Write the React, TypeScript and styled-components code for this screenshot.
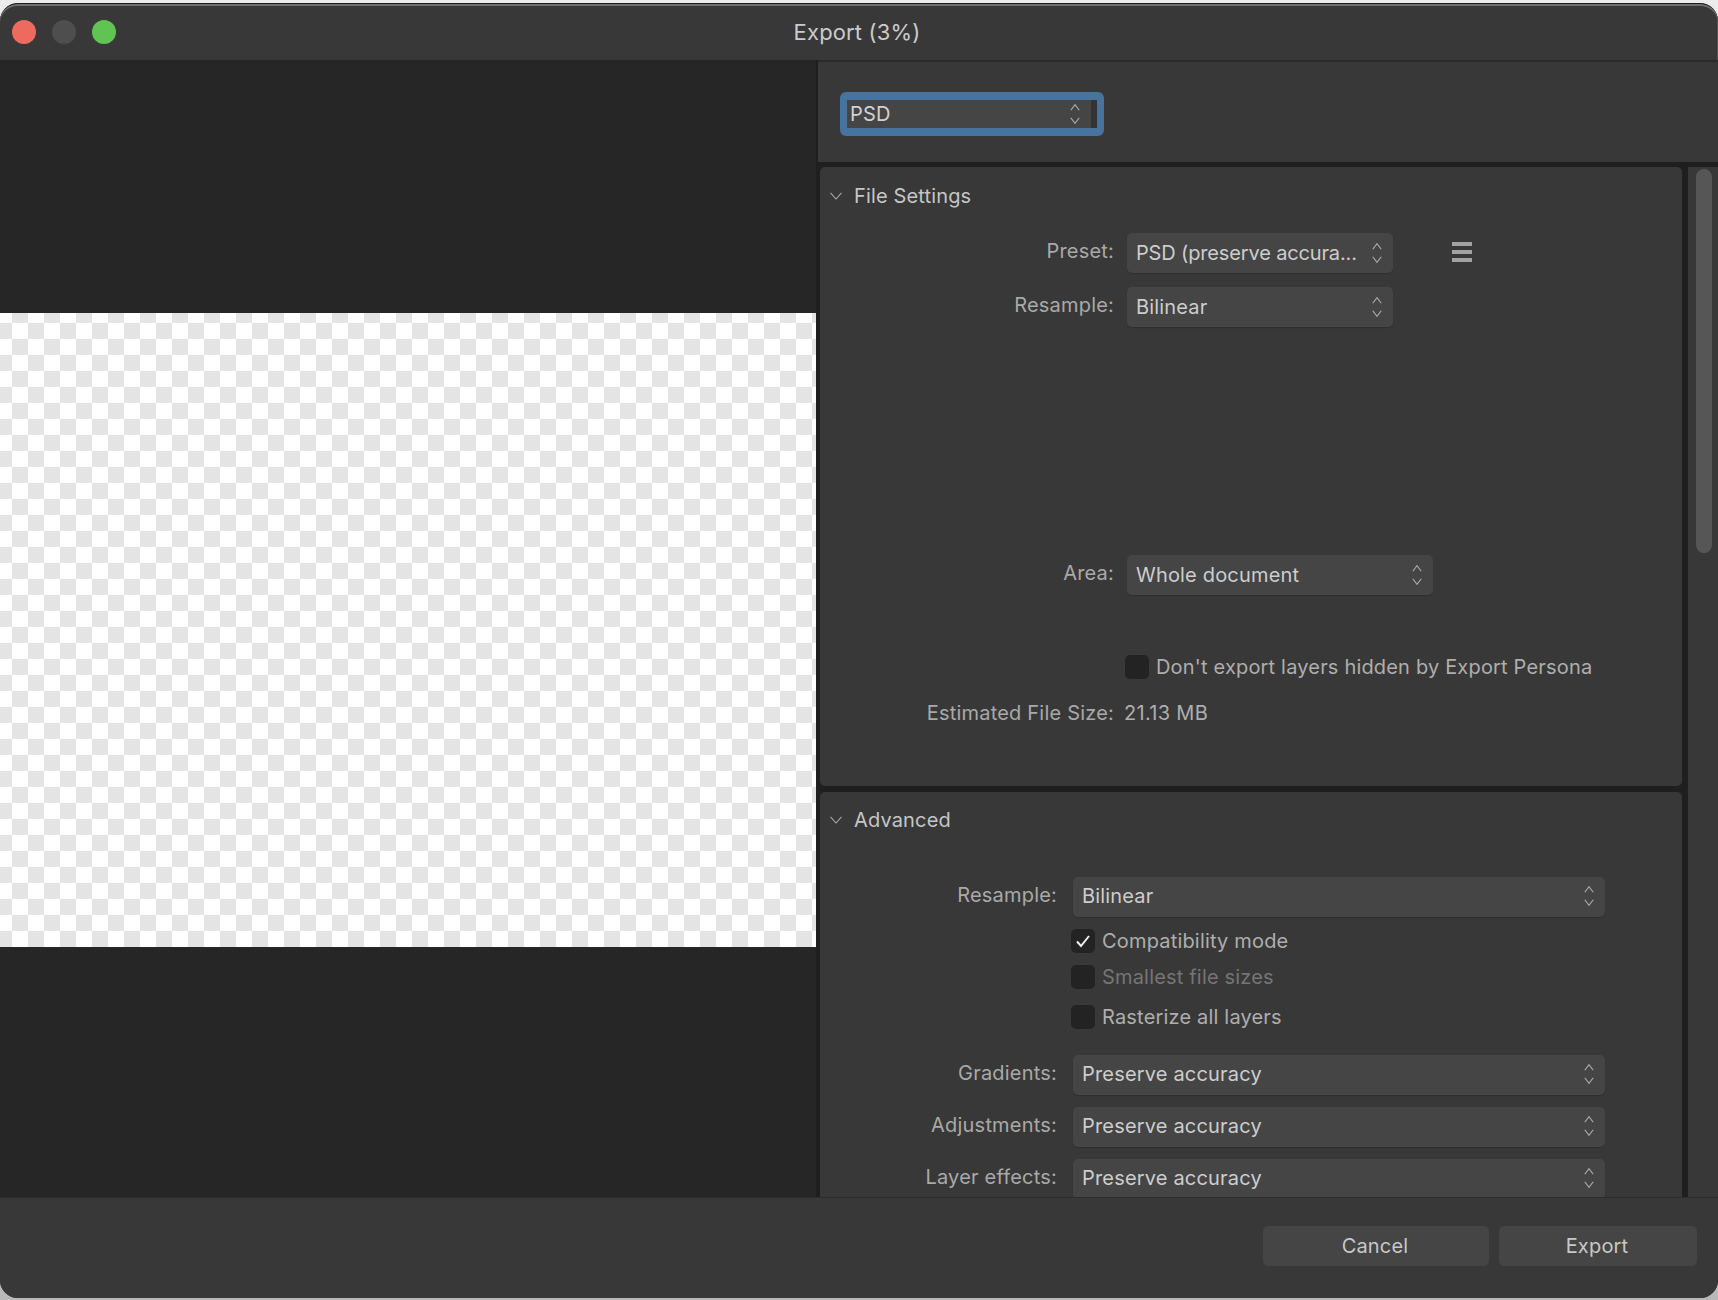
import React from "react";
import styled, { createGlobalStyle } from "styled-components";

const Global = createGlobalStyle`
  html, body { margin: 0; padding: 0; background: #e9e9e9; }
  body { font-family: Inter, "Liberation Sans", sans-serif; -webkit-font-smoothing: antialiased; }
  * { box-sizing: border-box; }
`;

const Page = styled.div`
  width: 1718px;
  height: 1300px;
  padding-top: 3px;
  background: linear-gradient(#ececec 0, #ececec 60%, #b8b8b8 100%);
  overflow: hidden;
`;

const Win = styled.div`
  width: 1718px;
  height: 1295px;
  display: flex;
  flex-direction: column;
  background: #383838;
  border-radius: 18px;
  border-top: 1px solid #1c1c1c;
  box-shadow: inset 0 2px 0 #6f6f6f, inset -1px 0 0 #555;
  overflow: hidden;
`;

const TitleBar = styled.div`
  height: 56px;
  flex: none;
  position: relative;
  display: flex;
  align-items: center;
  justify-content: center;
  padding-right: 4px;
`;

const Lights = styled.div`
  position: absolute;
  left: 12px;
  top: 16px;
  display: flex;
  gap: 16px;
`;

const Light = styled.span<{ $c: string }>`
  width: 24px;
  height: 24px;
  border-radius: 50%;
  background: ${(p) => p.$c};
`;

const Title = styled.div`
  font-size: 22px;
  color: #cbcbcb;
  letter-spacing: 0.15px;
`;

const Main = styled.div`
  flex: 1;
  min-height: 0;
  display: flex;
  background: #1f1f1f;
`;

const Preview = styled.div`
  width: 816px;
  flex: none;
  background: #262626;
  display: flex;
  align-items: center;
`;

const Checker = styled.div`
  width: 100%;
  height: 634px;
  margin-top: 2px;
  background-color: #fff;
  background-image: conic-gradient(#e4e4e4 25%, transparent 0 50%, #e4e4e4 0 75%, transparent 0);
  background-size: 32px 32px;
  background-position: -4px -6px;
`;

const Side = styled.div`
  flex: 1;
  min-width: 0;
  margin-left: 2px;
  display: flex;
  flex-direction: column;
  background: #1f1f1f;
`;

const FormatBar = styled.div`
  height: 102px;
  flex: none;
  padding: 30px 0 0 22px;
  background: #383838;
  border-top: 2px solid #2b2b2b;
`;

const SelectBox = styled.div<{ $w?: number; $ls?: number }>`
  width: ${(p) => (p.$w ? `${p.$w}px` : "auto")};
  height: 40px;
  flex: ${(p) => (p.$w ? "none" : "1")};
  display: flex;
  align-items: center;
  justify-content: space-between;
  padding: 0 10px var(--nudge, 0) 9px;
  border-radius: 5px;
  background: #454545;
  color: #cdcdcd;
  font-size: 20px;
  letter-spacing: ${(p) => p.$ls ?? 0.18}px;
  white-space: nowrap;
  box-shadow: 0 1px 1px #2f2f2f;
`;

const FocusRing = styled.div`
  width: 264px;
  height: 44px;
  padding: 8px 7px;
  border-radius: 6px;
  background: #47749f;
`;

const FocusField = styled.div`
  height: 100%;
  display: flex;
  align-items: center;
  justify-content: space-between;
  padding: 0 16px 0 3px;
  background: linear-gradient(90deg, #454545 0, #454545 97.6%, #333 97.6%);
  color: #d2d2d2;
  font-size: 20px;
  letter-spacing: 0.18px;
`;

const ScrollArea = styled.div`
  flex: 1;
  min-height: 0;
  display: flex;
  overflow: hidden;
  padding-top: 5px;
`;

const Panels = styled.div`
  width: 862px;
  margin-left: 2px;
  flex: none;
  display: flex;
  flex-direction: column;
  gap: 6px;
`;

const Panel = styled.section<{ $h: number }>`
  flex: none;
  height: ${(p) => p.$h}px;
  background: #383838;
  border-radius: 5px;
`;

const PanelHead = styled.div<{ $pad: number }>`
  height: 56px;
  display: flex;
  align-items: center;
  gap: 12px;
  padding: ${(p) => p.$pad}px 0 0 10px;
  color: #c6c6c6;
  font-size: 20px;
  letter-spacing: 0.15px;
`;

const Rows = styled.div<{ $label: number; $top: number; $gap: number; $nudge: number; $lift: number }>`
  --label: ${(p) => p.$label}px;
  --gap: ${(p) => p.$gap}px;
  --nudge: ${(p) => p.$nudge}px;
  --lift: ${(p) => p.$lift}px;
  padding-top: ${(p) => p.$top}px;
  display: flex;
  flex-direction: column;
`;

const Row = styled.div<{ $mt?: number }>`
  display: flex;
  align-items: center;
  gap: var(--gap);
  margin-top: ${(p) => p.$mt ?? 0}px;
`;

const Label = styled.span<{ $flat?: boolean }>`
  width: var(--label);
  flex: none;
  text-align: right;
  color: #a9a9a9;
  font-size: 20px;
  letter-spacing: 0.2px;
  position: relative;
  top: ${(p) => (p.$flat ? "0" : "var(--lift)")};
  white-space: nowrap;
`;

const Value = styled.span`
  color: #aeaeae;
  font-size: 20px;
  letter-spacing: 0.3px;
  margin-left: -3px;
`;

const CheckRow = styled.div<{ $mt: number; $left: number }>`
  display: flex;
  align-items: center;
  gap: 7px;
  margin-top: ${(p) => p.$mt}px;
  margin-left: ${(p) => p.$left}px;
`;

const Box = styled.span`
  width: 24px;
  height: 24px;
  flex: none;
  display: flex;
  align-items: center;
  justify-content: center;
  border-radius: 5px;
  background: #232323;
`;

const CheckText = styled.span<{ $dim?: boolean }>`
  color: ${(p) => (p.$dim ? "#757575" : "#aeaeae")};
  font-size: 20px;
  letter-spacing: 0.18px;
`;

const MenuIcon = styled.span`
  width: 20px;
  height: 20px;
  margin: 0 0 2px 46px;
  display: flex;
  flex-direction: column;
  justify-content: space-between;
`;

const MenuBar = styled.i`
  display: block;
  height: 4px;
  background: #a2a2a2;
`;

const Track = styled.div`
  flex: 1;
  margin-left: 6px;
  padding: 2px 6px 0 8px;
  background: #383838;
`;

const Thumb = styled.div`
  width: 16px;
  height: 384px;
  border-radius: 8px;
  background: #565656;
`;

const Footer = styled.div`
  height: 101px;
  flex: none;
  display: flex;
  justify-content: flex-end;
  gap: 10px;
  padding: 28px 21px 0 0;
  background: #383838;
  border-top: 1px solid #2d2d2d;
`;

const Button = styled.button<{ $w: number }>`
  width: ${(p) => p.$w}px;
  height: 40px;
  border: 0;
  padding: 0 2px 0 0;
  border-radius: 5px;
  background: #454545;
  color: #c8c8c8;
  font: inherit;
  font-size: 20px;
  letter-spacing: 0.18px;
`;

const Updown = () => (
  <svg width="12" height="22" viewBox="0 0 12 22" fill="none" stroke="#aaaaaa" strokeWidth="1.2">
    <path d="M1.75 7.25 6 1.75l4.25 5.5" />
    <path d="M1.75 14.75 6 20.25l4.25-5.5" />
  </svg>
);

const Chevron = () => (
  <svg width="12" height="8" viewBox="0 0 12 8" fill="none" stroke="#a8a8a8" strokeWidth="1.1">
    <path d="M.5.8 6 7 11.5.8" />
  </svg>
);

const Tick = () => (
  <svg width="16" height="14" viewBox="0 0 16 14" fill="none" stroke="#f0f0f0" strokeWidth="2">
    <path d="M2 7.5 6 12 14 2" />
  </svg>
);

const Select = ({ text, w, ls }: { text: string; w?: number; ls?: number }) => (
  <SelectBox $w={w} $ls={ls}>
    {text}
    <Updown />
  </SelectBox>
);

export default function App() {
  return (
    <Page>
      <Global />
      <Win>
        <TitleBar>
          <Lights>
            <Light $c="#ee6a5f" />
            <Light $c="#4e4e4e" />
            <Light $c="#5fc454" />
          </Lights>
          <Title>Export (3%)</Title>
        </TitleBar>
        <Main>
          <Preview>
            <Checker />
          </Preview>
          <Side>
            <FormatBar>
              <FocusRing>
                <FocusField>
                  PSD
                  <Updown />
                </FocusField>
              </FocusRing>
            </FormatBar>
            <ScrollArea>
              <Panels>
                <Panel $h={619}>
                  <PanelHead $pad={1}>
                    <Chevron />
                    File Settings
                  </PanelHead>
                  <Rows $label={294} $top={10} $gap={13} $nudge={0} $lift={-2}>
                    <Row>
                      <Label>Preset:</Label>
                      <Select text="PSD (preserve accura..." w={266} ls={-0.15} />
                      <MenuIcon>
                        <MenuBar />
                        <MenuBar />
                        <MenuBar />
                      </MenuIcon>
                    </Row>
                    <Row $mt={14}>
                      <Label>Resample:</Label>
                      <Select text="Bilinear" w={266} />
                    </Row>
                    <Row $mt={228}>
                      <Label>Area:</Label>
                      <Select text="Whole document" w={306} />
                    </Row>
                    <CheckRow $mt={60} $left={305}>
                      <Box />
                      <CheckText>Don't export layers hidden by Export Persona</CheckText>
                    </CheckRow>
                    <Row $mt={22}>
                      <Label $flat>Estimated File Size:</Label>
                      <Value>21.13 MB</Value>
                    </Row>
                  </Rows>
                </Panel>
                <Panel $h={500}>
                  <PanelHead $pad={0}>
                    <Chevron />
                    Advanced
                  </PanelHead>
                  <Rows $label={237} $top={29} $gap={16} $nudge={2} $lift={-2}>
                    <Row>
                      <Label>Resample:</Label>
                      <Select text="Bilinear" w={532} />
                    </Row>
                    <CheckRow $mt={12} $left={251}>
                      <Box>
                        <Tick />
                      </Box>
                      <CheckText>Compatibility mode</CheckText>
                    </CheckRow>
                    <CheckRow $mt={12} $left={251}>
                      <Box />
                      <CheckText $dim>Smallest file sizes</CheckText>
                    </CheckRow>
                    <CheckRow $mt={16} $left={251}>
                      <Box />
                      <CheckText>Rasterize all layers</CheckText>
                    </CheckRow>
                    <Row $mt={26}>
                      <Label>Gradients:</Label>
                      <Select text="Preserve accuracy" w={532} />
                    </Row>
                    <Row $mt={12}>
                      <Label>Adjustments:</Label>
                      <Select text="Preserve accuracy" w={532} />
                    </Row>
                    <Row $mt={12}>
                      <Label>Layer effects:</Label>
                      <Select text="Preserve accuracy" w={532} />
                    </Row>
                  </Rows>
                </Panel>
              </Panels>
              <Track>
                <Thumb />
              </Track>
            </ScrollArea>
          </Side>
        </Main>
        <Footer>
          <Button $w={226}>Cancel</Button>
          <Button $w={198}>Export</Button>
        </Footer>
      </Win>
    </Page>
  );
}
